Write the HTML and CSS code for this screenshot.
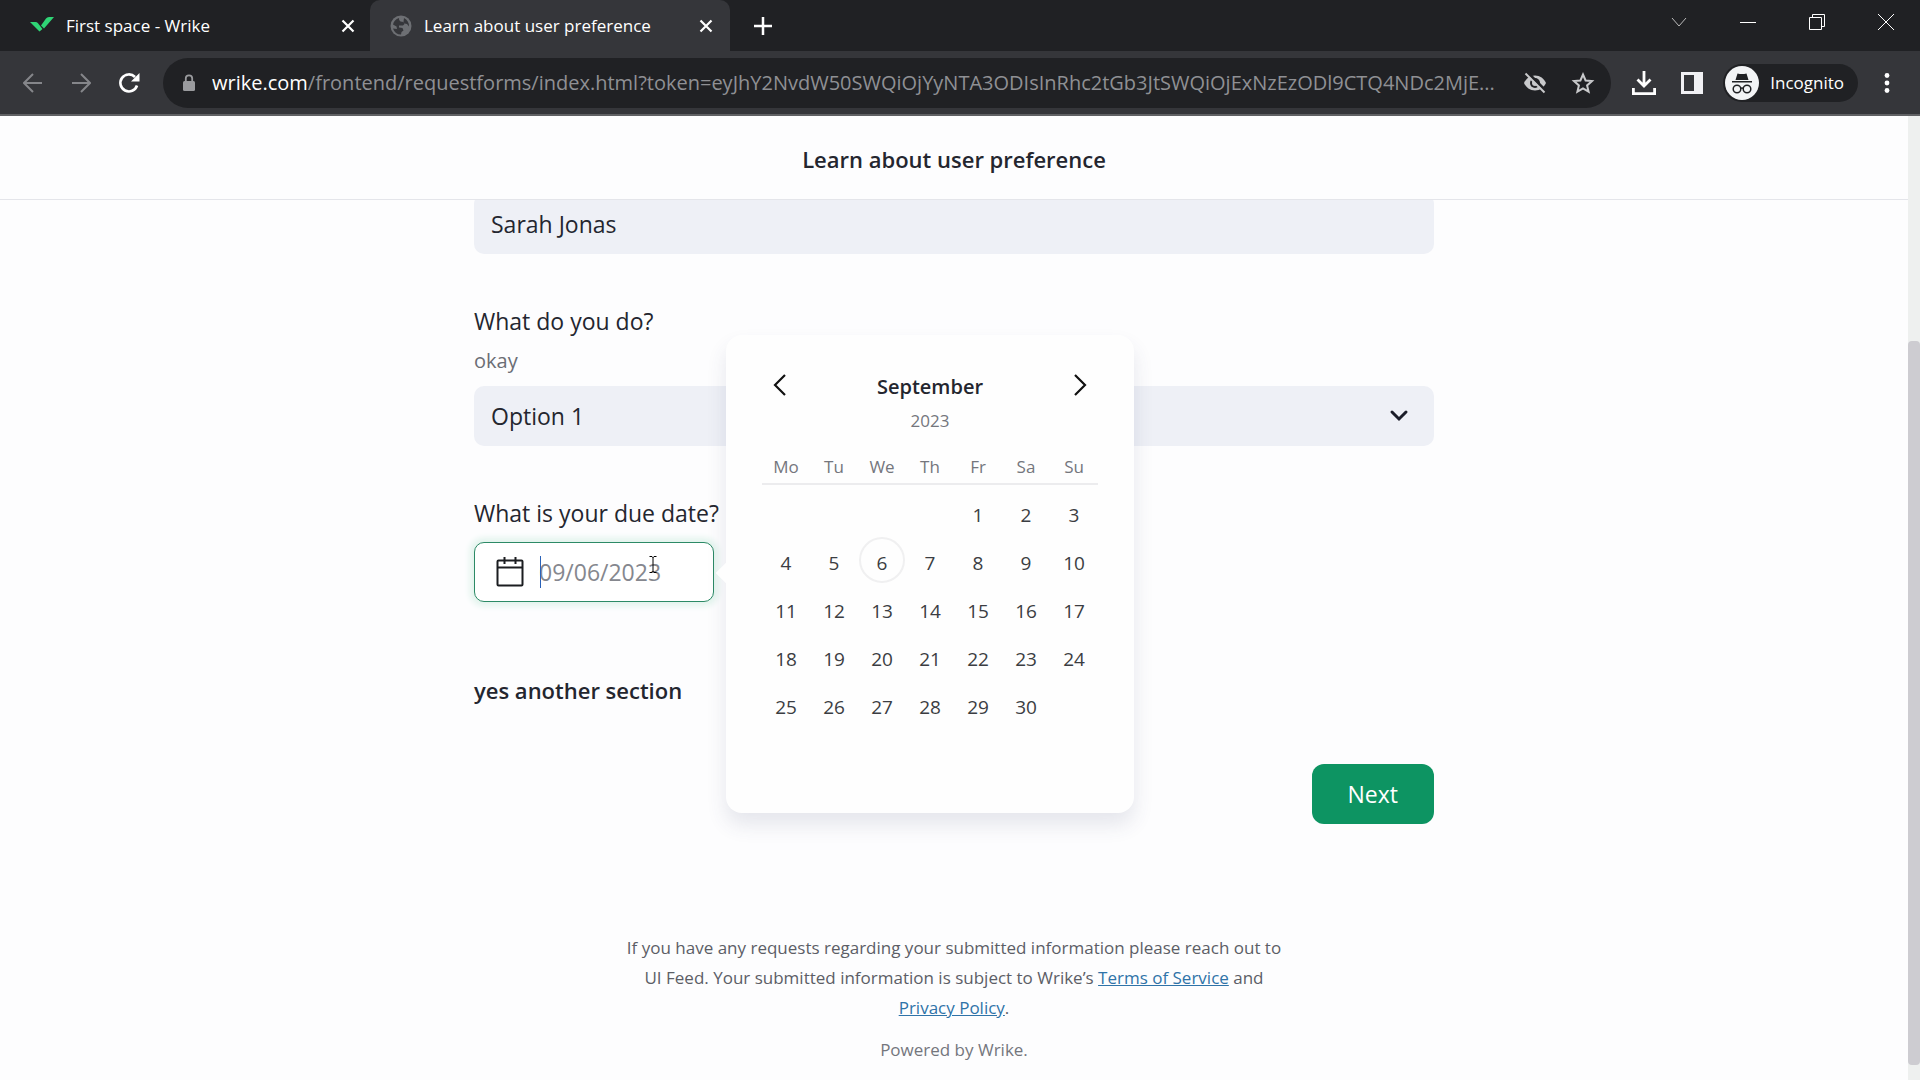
FILE: index.html
```html
<!DOCTYPE html>
<html lang="en">
<head>
    <meta charset="utf-8">
    <title>Learn about user preference</title>
    <link rel="stylesheet" href="styles.css">
</head>
<body>
    <div class="browser">
        <div class="tabstrip">
            <div class="tab">
                <svg class="favicon" width="24" height="24" viewBox="0 0 24 24"><path fill="#2fd576" d="M0 8h5.500q1.500 0 2.500 1.200L10.500 12.500 12.500 15 9.500 17.500z"/><path fill="#2fd576" d="M11 11.500L16 4.500q1-1.500 3-1.500h5L14 14.500z"/></svg>
                <span class="tab-title">First space - Wrike</span>
                <button class="icon-btn" aria-label="Close tab"><svg width="14" height="14" viewBox="0 0 14 14" stroke="#fff" stroke-width="2.200"><path d="M1.500 1.500l11 11M12.500 1.500l-11 11"/></svg></button>
            </div>
            <div class="tab active">
                <svg class="favicon" width="22" height="22" viewBox="0 0 22 22"><circle cx="11" cy="11" r="10.500" fill="#6d6f73"/><path fill="#35363a" d="M3 9.500q1-5 6-6.500-.500 2.500 1.500 3.500l3 .500 1 2-1.500 1.500H9v2l3.500.500 1 2.500-2 1.500-.500 2.500q-6 0-8-6l4 .500-.500-2.500zM14 3q5 2.500 5 8.500l-2-2.500-2.500-.500-1-2z"/></svg>
                <span class="tab-title">Learn about user preference</span>
                <button class="icon-btn" aria-label="Close tab"><svg width="14" height="14" viewBox="0 0 14 14" stroke="#fff" stroke-width="2.200"><path d="M1.500 1.500l11 11M12.500 1.500l-11 11"/></svg></button>
            </div>
            <button class="icon-btn new-tab" aria-label="New tab"><svg width="18" height="18" viewBox="0 0 18 18" stroke="#fff" stroke-width="2.500"><path d="M9 0v18M0 9h18"/></svg></button>
            <div class="window-controls">
                <button class="icon-btn" aria-label="Search tabs"><svg width="16" height="16" viewBox="0 0 16 16" fill="none" stroke="#bbb"><path d="M1 4l7 8 7-8"/></svg></button>
                <button class="icon-btn" aria-label="Minimize"><svg width="16" height="16" viewBox="0 0 16 16" stroke="#fff"><path d="M0 8.500h16"/></svg></button>
                <button class="icon-btn" aria-label="Restore"><svg width="16" height="16" viewBox="0 0 16 16" fill="none" stroke="#fff"><path d="M.500 3.500h12v12H.500zM3.500 3.500v-3h12v12h-3"/></svg></button>
                <button class="icon-btn" aria-label="Close"><svg width="16" height="16" viewBox="0 0 16 16" stroke="#fff"><path d="M0 0l16 16M16 0L0 16"/></svg></button>
            </div>
        </div>

        <div class="toolbar">
            <button class="icon-btn nav-btn" aria-label="Back"><svg width="20" height="20" viewBox="0 0 20 20" fill="none" stroke="#85868a" stroke-width="2"><path d="M19 10H2M10 1l-9 9 9 9"/></svg></button>
            <button class="icon-btn nav-btn" aria-label="Forward"><svg width="20" height="20" viewBox="0 0 20 20" fill="none" stroke="#85868a" stroke-width="2"><path d="M1 10h17M10 1l9 9-9 9"/></svg></button>
            <button class="icon-btn nav-btn" aria-label="Reload"><svg width="22" height="22" viewBox="0 0 22 22" fill="none" stroke="#fff" stroke-width="2.600"><path d="M19 13.500A8.500 8.500 0 1 1 17 5"/><path fill="#fff" stroke="none" d="M21.500 1v8.500H13z"/></svg></button>
            <div class="omnibox">
                <svg width="14" height="18" viewBox="0 0 14 18"><rect x="1" y="7" width="12" height="10" rx="1.500" fill="#9a9b9e"/><path fill="none" stroke="#9a9b9e" stroke-width="1.800" d="M3.800 8V4.500a3.200 3.200 0 0 1 6.400 0V8"/></svg>
                <div class="url" role="textbox" aria-label="Address"><span class="host">wrike.com</span>/frontend/requestforms/index.html?token=eyJhY2NvdW50SWQiOjYyNTA3ODIsInRhc2tGb3JtSWQiOjExNzEzODl9CTQ4NDc2MjE...</div>
                <button class="icon-btn" aria-label="Third-party cookies blocked"><svg width="24" height="24" viewBox="0 0 24 24"><path fill="#c8c9cb" d="M12 4.500c5 0 9 3 11 7.500-2 4.500-6 7.500-11 7.500S3 16.500 1 12c2-4.500 6-7.500 11-7.500z"/><circle cx="12" cy="12" r="5" fill="#202124"/><circle cx="12" cy="12" r="3" fill="#c8c9cb"/><path stroke="#202124" stroke-width="3" d="M4 1l19 19"/><path stroke="#c8c9cb" stroke-width="2" d="M2.500 2.500l19 19"/></svg></button>
                <button class="icon-btn" aria-label="Bookmark this tab"><svg width="24" height="24" viewBox="0 0 24 24" fill="none" stroke="#c8c9cb" stroke-width="2"><path d="M12 3.500l2.600 6 6.400.600-4.900 4.300 1.500 6.300-5.600-3.400-5.600 3.400 1.500-6.300L3 10.100l6.400-.600z"/></svg></button>
            </div>
            <div class="actions">
                <button class="icon-btn" aria-label="Downloads"><svg width="26" height="26" viewBox="0 0 26 26" fill="none" stroke="#fff" stroke-width="2.800"><path d="M13 1v14M6.500 9.500l6.500 6.500 6.500-6.500M2.400 18v5.600h21.200V18"/></svg></button>
                <button class="icon-btn" aria-label="Side panel"><svg width="22" height="22" viewBox="0 0 22 22"><path fill="#f1f1f4" fill-rule="evenodd" d="M0 0h22v22H0zM3 3v16h10V3z"/></svg></button>
                <button class="incognito">
                    <svg width="34" height="34" viewBox="0 0 34 34"><circle cx="17" cy="17" r="17" fill="#f3f4f6"/><path fill="#202124" d="M12.500 7.500q4.500 1 9 0l2 6.500h-13zM7 15h20v1.500H7z"/><g fill="none" stroke="#202124" stroke-width="1.500"><circle cx="12" cy="23" r="3.800"/><circle cx="22" cy="23" r="3.800"/><path d="M15.500 22.500q1.500-1 3 0"/></g></svg>
                    <span>Incognito</span>
                </button>
                <button class="icon-btn" aria-label="Menu"><svg width="6" height="20" viewBox="0 0 6 20" fill="#fff"><circle cx="3" cy="2.500" r="2.400"/><circle cx="3" cy="10" r="2.400"/><circle cx="3" cy="17.500" r="2.400"/></svg></button>
            </div>
        </div>
    </div>

    <div class="viewport">
        <div class="page">
            <header class="page-header">
                <h1>Learn about user preference</h1>
            </header>
            <main class="content">
                <form class="form">
                    <input class="field" type="text" value="Sarah Jonas" aria-label="Name">

                    <div class="question">
                        <label for="job">What do you do?</label>
                        <p class="hint">okay</p>
                        <div class="select-wrap">
                            <select class="field" id="job">
                                <option>Option 1</option>
                            </select>
                            <svg class="chevron" width="20" height="14" viewBox="0 0 20 14" fill="none" stroke="#1b1d29" stroke-width="3" stroke-linecap="round"><path d="M3 3l7 7 7-7"/></svg>
                        </div>
                    </div>

                    <div class="question">
                        <label for="due">What is your due date?</label>
                        <div class="date-wrap">
                            <svg width="28" height="30" viewBox="0 0 28 30" fill="none" stroke="#1b1d20" stroke-width="2"><rect x="1.500" y="3.500" width="25" height="25" rx="1"/><path d="M1.500 10.500h25M8.500 0v7M19.500 0v7"/></svg>
                            <input class="date-input" id="due" type="text" placeholder="09/06/2023">
                            <span class="caret"></span>
                            <svg class="ibeam" width="8" height="17" viewBox="0 0 8 17" fill="none" stroke="#000"><path d="M.500.500h2.500l1 1 1-1h2.500M4 1v15M.500 16.500h2.500l1-1 1 1h2.500"/></svg>

                            <div class="calendar">
                                <div class="cal-head">
                                    <button type="button" class="icon-btn" aria-label="Previous month"><svg width="14" height="22" viewBox="0 0 14 22" fill="none" stroke="#111" stroke-width="2.200"><path d="M12 1L2 11l10 10"/></svg></button>
                                    <div class="cal-title">
                                        <strong>September</strong>
                                        <span>2023</span>
                                    </div>
                                    <button type="button" class="icon-btn" aria-label="Next month"><svg width="14" height="22" viewBox="0 0 14 22" fill="none" stroke="#111" stroke-width="2.200"><path d="M2 1l10 10L2 21"/></svg></button>
                                </div>
                                <table>
                                    <thead>
                                        <tr><th>Mo</th><th>Tu</th><th>We</th><th>Th</th><th>Fr</th><th>Sa</th><th>Su</th></tr>
                                    </thead>
                                    <tbody>
                                        <tr><td></td><td></td><td></td><td></td><td><button type="button">1</button></td><td><button type="button">2</button></td><td><button type="button">3</button></td></tr>
                                        <tr><td><button type="button">4</button></td><td><button type="button">5</button></td><td><button type="button" class="today">6</button></td><td><button type="button">7</button></td><td><button type="button">8</button></td><td><button type="button">9</button></td><td><button type="button">10</button></td></tr>
                                        <tr><td><button type="button">11</button></td><td><button type="button">12</button></td><td><button type="button">13</button></td><td><button type="button">14</button></td><td><button type="button">15</button></td><td><button type="button">16</button></td><td><button type="button">17</button></td></tr>
                                        <tr><td><button type="button">18</button></td><td><button type="button">19</button></td><td><button type="button">20</button></td><td><button type="button">21</button></td><td><button type="button">22</button></td><td><button type="button">23</button></td><td><button type="button">24</button></td></tr>
                                        <tr><td><button type="button">25</button></td><td><button type="button">26</button></td><td><button type="button">27</button></td><td><button type="button">28</button></td><td><button type="button">29</button></td><td><button type="button">30</button></td><td></td></tr>
                                    </tbody>
                                </table>
                            </div>
                        </div>
                    </div>

                    <h2>yes another section</h2>

                    <div class="form-actions">
                        <button type="button" class="next-btn">Next</button>
                    </div>
                </form>

                <footer class="page-footer">
                    <p>If you have any requests regarding your submitted information please reach out to UI Feed. Your submitted information is subject to Wrike’s <a href="#">Terms of Service</a> and <a href="#">Privacy Policy</a>.</p>
                    <p class="powered">Powered by Wrike.</p>
                </footer>
            </main>
        </div>
        <div class="scrollbar"><div class="thumb"></div></div>
    </div>
</body>
</html>
```
FILE: styles.css
```css
* {
    box-sizing: border-box;
}

body {
    display: flex;
    flex-direction: column;
    height: 100vh;
    margin: 0;
    overflow: hidden;
    font-family: "Open Sans", "Noto Sans", sans-serif;
    color: #24262f;
    background-color: #fdfdfe;
}

button, input, select {
    font-family: inherit;
}

p, h1, h2 {
    margin: 0;
}

.icon-btn {
    display: flex;
    align-items: center;
    justify-content: center;
    padding: 0;
    border: none;
    background: none;
    cursor: pointer;
}

/* Browser window */
.browser {
    flex: none;
    background-color: #35363a;
    border-bottom: 2px solid #606164;
    color: #fff;
}

.tabstrip {
    display: flex;
    align-items: stretch;
    height: 51px;
    background-color: #202124;
}

.tab {
    display: flex;
    align-items: center;
    width: 370px;
    padding: 0 15px 0 30px;
    font-size: 17px;
}

.tab.active {
    width: 360px;
    padding: 0 17px 0 20px;
    background-color: #35363a;
    border-radius: 10px 10px 0 0;
}

.favicon {
    flex: none;
    margin-right: 12px;
}

.tab-title {
    flex: 1;
    white-space: nowrap;
}

.new-tab {
    width: 66px;
}

.window-controls {
    display: flex;
    margin-left: auto;
    height: 43px;
}

.window-controls .icon-btn {
    width: 69px;
}

.toolbar {
    display: flex;
    align-items: center;
    height: 63px;
    padding: 0 16px 0 9px;
}

.nav-btn {
    width: 48px;
    height: 48px;
}

.omnibox {
    display: flex;
    flex: 1;
    align-items: center;
    gap: 24px;
    min-width: 0;
    height: 50px;
    margin-left: 10px;
    padding: 0 16px 0 19px;
    border-radius: 25px;
    background-color: #202124;
}

.omnibox > svg {
    flex: none;
    margin-right: -8px;
}

.url {
    flex: 1;
    overflow: hidden;
    font-size: 20px;
    color: #8f9094;
    white-space: nowrap;
}

.host {
    color: #fff;
}

.actions {
    display: flex;
    align-items: center;
    gap: 24px;
    margin-left: 20px;
}

.incognito {
    display: flex;
    align-items: center;
    gap: 11px;
    height: 38px;
    margin-left: -4px;
    padding: 0 14px 0 2px;
    border: none;
    border-radius: 19px;
    background-color: #202124;
    font-size: 17px;
    color: #fff;
}

.actions > :last-child {
    width: 34px;
    margin-left: -12px;
}

/* Request form page */
.viewport {
    display: flex;
    flex: 1;
    min-height: 0;
}

.page {
    display: flex;
    flex: 1;
    flex-direction: column;
    min-width: 0;
}

.page-header {
    display: flex;
    flex: none;
    align-items: center;
    justify-content: center;
    height: 84px;
    padding-top: 2px;
    border-bottom: 1px solid #e4e5ea;
}

.page-header h1 {
    font-size: 22px;
    font-weight: 600;
}

.content {
    flex: 1;
    overflow: hidden;
}

.form {
    width: 100%;
    max-width: 960px;
    margin: -6px auto 0;
}

.field {
    display: block;
    width: 100%;
    height: 60px;
    padding: 0 17px;
    border: none;
    border-radius: 10px;
    background-color: #eef0f6;
    font-size: 23px;
    color: #24262f;
    appearance: none;
}

.question {
    margin-top: 52px;
}

.question label {
    display: block;
    font-size: 23px;
    line-height: 30px;
}

.hint {
    margin: 9px 0;
    font-size: 20px;
    line-height: 32px;
    color: #6b6d75;
}

.select-wrap {
    position: relative;
}

.chevron {
    position: absolute;
    top: 23px;
    right: 25px;
    pointer-events: none;
}

.date-wrap {
    position: relative;
    display: flex;
    align-items: center;
    gap: 15px;
    width: 240px;
    height: 60px;
    margin-top: 14px;
    padding: 0 16px 0 21px;
    border: 1px solid #2c8a66;
    border-radius: 10px;
    background-color: #fff;
    box-shadow: 0 0 6px 4px #e1f3ec;
}

.date-wrap > svg {
    flex: none;
}

.date-input {
    flex: 1;
    min-width: 0;
    padding: 0;
    border: none;
    outline: none;
    background: none;
    font-size: 23px;
}

.date-input::placeholder {
    color: #85878e;
}

.caret {
    position: absolute;
    top: 13px;
    left: 65px;
    width: 1px;
    height: 32px;
    background-color: #2a62b8;
}

.ibeam {
    position: absolute;
    top: 13px;
    left: 174px;
}

.calendar {
    position: absolute;
    top: -208px;
    left: 251px;
    width: 408px;
    padding: 35px 36px 85px;
    border-radius: 16px;
    background-color: #fefefe;
    box-shadow: 0 12px 20px rgba(60, 65, 110, 0.12);
}

/* Pointer towards the date field */
.calendar::before {
    content: "";
    position: absolute;
    top: 230px;
    left: -7px;
    width: 16px;
    height: 16px;
    background-color: #fefefe;
    transform: rotate(45deg);
}

.cal-head {
    display: flex;
    align-items: flex-start;
    justify-content: space-between;
    padding: 0 10px;
}

.cal-head .icon-btn {
    height: 30px;
    width: 16px;
}

.cal-title {
    display: flex;
    flex-direction: column;
    align-items: center;
    line-height: 34px;
}

.cal-title strong {
    font-size: 20px;
    font-weight: 600;
}

.cal-title span {
    font-size: 17px;
    color: #74767d;
}

.calendar table {
    width: 100%;
    margin-top: 10px;
    border-collapse: collapse;
    table-layout: fixed;
}

.calendar th {
    height: 36px;
    padding: 2px 0 0;
    border-bottom: 2px solid #ececee;
    font-size: 17px;
    font-weight: 400;
    color: #74767d;
}

.calendar tbody::before {
    content: "";
    display: block;
    height: 3px;
}

.calendar td {
    height: 48px;
    padding: 0;
    text-align: center;
}

.calendar td button {
    width: 46px;
    height: 46px;
    padding: 6px 0 0;
    border: 2px solid transparent;
    border-radius: 50%;
    background: none;
    font-size: 19px;
    color: #3b3d42;
}

.calendar td .today {
    border-color: #f0f0f1;
}

.form h2 {
    margin-top: 71px;
    font-size: 22px;
    font-weight: 600;
    line-height: 34px;
}

.form-actions {
    display: flex;
    justify-content: flex-end;
    margin-top: 57px;
}

.next-btn {
    height: 60px;
    padding: 0 36px;
    border: none;
    border-radius: 12px;
    background-color: #0d9462;
    font-size: 23px;
    color: #fff;
    cursor: pointer;
}

.page-footer {
    max-width: 664px;
    margin: 109px auto 0;
    font-size: 17px;
    line-height: 30px;
    text-align: center;
    color: #5c5e66;
}

.page-footer a {
    color: #2f73a8;
}

.page-footer .powered {
    margin-top: 12px;
    color: #74767d;
}

.scrollbar {
    flex: none;
    width: 12px;
    padding: 225px 0 15px;
    background-color: #eef0ef;
}

.thumb {
    height: 100%;
    border-radius: 4px;
    background-color: #cdccd1;
}
```
